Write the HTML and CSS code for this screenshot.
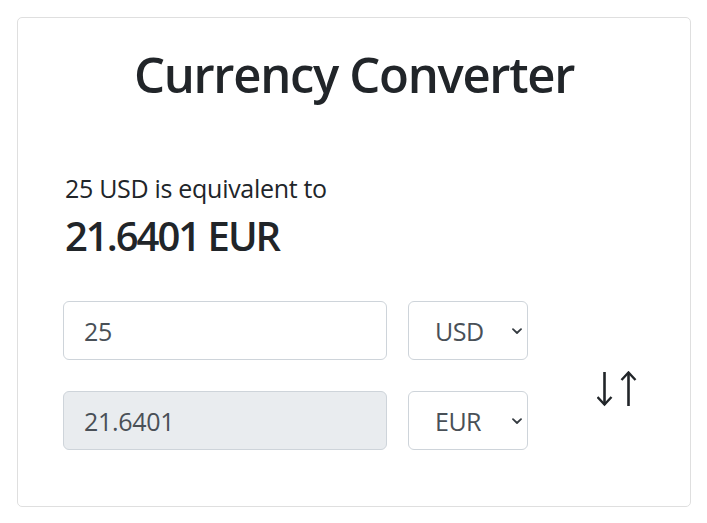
FILE: index.html
```html
<!DOCTYPE html>
<html lang="en">
<head>
<meta charset="utf-8">
<title>Currency Converter</title>
<link rel="stylesheet" href="styles.css">
</head>
<body>
<div class="card">
  <h1 class="title">Currency Converter</h1>
  <p class="lead-text">25 USD is equivalent to</p>
  <h2 class="result">21.6401 EUR</h2>
  <div class="converter">
    <input class="field" type="text" value="25">
    <div class="select-wrap">
      <select class="currency"><option>USD</option></select>
      <svg class="chev" width="10" height="7" viewBox="0 0 10 7"><path d="M1 1.2 L5 5 L9 1.2" fill="none" stroke="#343a40" stroke-width="1.8" stroke-linecap="round" stroke-linejoin="round"/></svg>
    </div>
    <svg class="swap" width="42" height="36" viewBox="0 0 42 36">
      <g fill="none" stroke="#212529" stroke-width="2.6" stroke-linecap="butt">
        <path d="M7.5 1 V34"/>
        <path d="M0.5 26 L7.5 33.5 L14.5 26" stroke-width="2.4"/>
        <path d="M31.5 35 V2"/>
        <path d="M24.5 9 L31.5 1.5 L38.5 9" stroke-width="2.4"/>
      </g>
    </svg>
    <input class="field readonly" type="text" value="21.6401" readonly>
    <div class="select-wrap">
      <select class="currency"><option>EUR</option></select>
      <svg class="chev" width="10" height="7" viewBox="0 0 10 7"><path d="M1 1.2 L5 5 L9 1.2" fill="none" stroke="#343a40" stroke-width="1.8" stroke-linecap="round" stroke-linejoin="round"/></svg>
    </div>
  </div>
</div>
</body>
</html>
```
FILE: styles.css
```css
html, body {
  margin: 0;
  padding: 0;
  background: #fff;
}
body {
  font-family: "Open Sans", "Noto Sans", sans-serif;
  color: #212529;
}
.card {
  box-sizing: border-box;
  margin: 17px 0 0 17px;
  width: 674px;
  height: 490px;
  border: 1px solid #dfdfdf;
  border-radius: 5px;
  padding: 26px 45px 0 45px;
}
.title {
  margin: 0;
  font-size: 49px;
  line-height: 60px;
  font-weight: 600;
  letter-spacing: -1.3px;
  text-align: center;
}
.lead-text {
  margin: 69px 0 0 0;
  padding-left: 2px;
  font-size: 25px;
  line-height: 30px;
  font-weight: 400;
  letter-spacing: -0.3px;
}
.result {
  margin: 9px 0 0 0;
  padding-left: 2px;
  font-size: 40px;
  line-height: 48px;
  font-weight: 600;
  letter-spacing: -2px;
}
.converter {
  margin-top: 41px;
  display: grid;
  grid-template-columns: 324px 120px 1fr;
  grid-template-rows: 59px 59px;
  column-gap: 21px;
  row-gap: 31px;
}
.field {
  box-sizing: border-box;
  width: 100%;
  height: 59px;
  margin: 0;
  border: 1px solid #ced4da;
  border-radius: 6px;
  padding: 0 20px;
  font-family: inherit;
  font-size: 25px;
  letter-spacing: -0.3px;
  color: #495057;
  background: #fff;
  outline: none;
}
.readonly {
  background: #e9ecef;
}
.select-wrap {
  position: relative;
}
.currency {
  box-sizing: border-box;
  width: 100%;
  height: 59px;
  margin: 0;
  border: 1px solid #ced4da;
  border-radius: 6px;
  padding: 0 0 0 26px;
  font-family: inherit;
  font-size: 25px;
  letter-spacing: -0.5px;
  color: #495057;
  background: #fff;
  appearance: none;
  -webkit-appearance: none;
}
.chev {
  position: absolute;
  left: 104px;
  top: 27px;
}
.swap {
  grid-column: 3;
  grid-row: 1 / span 2;
  margin: 70px 0 0 48px;
}
```
